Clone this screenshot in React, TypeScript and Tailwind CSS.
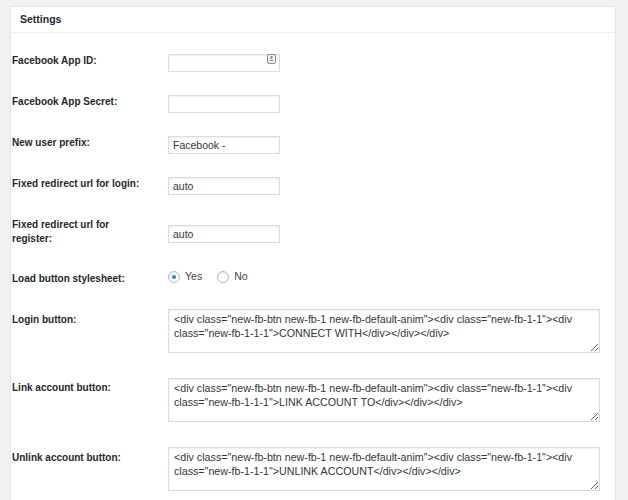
import React from "react";

const font = { fontFamily: '"Liberation Sans", Arial, sans-serif' };

const fbHtml = (text: string) =>
  `<div class="new-fb-btn new-fb-1 new-fb-default-anim"><div class="new-fb-1-1"><div class="new-fb-1-1-1">${text}</div></div></div>`;

const Label: React.FC<{ text: string }> = ({ text }) => (
  <div className="w-[157px] shrink-0 pl-[1px] pt-[21px] pr-[20px] text-[10px] font-bold leading-[14px] text-[#23282d]">
    {text}
  </div>
);

const TextInput: React.FC<{ value?: string; keyIcon?: boolean }> = ({ value = "", keyIcon }) => (
  <div className="relative w-[112px]">
    <input
      type="text"
      defaultValue={value}
      className="h-[18px] w-[112px] border border-[#dcdcdc] bg-white px-[4px] text-[10.5px] text-[#32373c] shadow-[inset_0_1px_2px_rgba(0,0,0,0.07)] outline-none"
      style={font}
    />
    {keyIcon && (
      <svg className="absolute right-[4px] top-[4px]" width="9" height="10" viewBox="0 0 9 10">
        <rect x="0.5" y="0.5" width="8" height="9" rx="1.5" fill="#f4f4f4" stroke="#8c8c8c" />
        <rect x="3.5" y="2" width="2" height="3" fill="#8c8c8c" />
        <rect x="2.5" y="6" width="4" height="1" fill="#8c8c8c" />
      </svg>
    )}
  </div>
);

const Area: React.FC<{ value: string }> = ({ value }) => (
  <textarea
    defaultValue={value}
    className="block h-[44px] w-[432px] resize-y border border-[#dcdcdc] bg-white px-[5px] pt-[2px] text-[10.7px] leading-[14px] text-[#32373c] shadow-[inset_0_1px_2px_rgba(0,0,0,0.07)] outline-none"
    style={font}
  />
);

const Radio: React.FC<{ checked?: boolean; label: string }> = ({ checked, label }) => (
  <label className="flex items-center gap-[5px]">
    <span className="flex h-[12px] w-[12px] items-center justify-center rounded-full border border-[#b4b9be] bg-white shadow-[inset_0_1px_2px_rgba(0,0,0,0.1)]">
      {checked && <span className="h-[4px] w-[4px] rounded-full bg-[#1e8cbe]" />}
    </span>
    <span className="text-[10.5px] text-[#444]">{label}</span>
  </label>
);

export default function App() {
  return (
    <div className="min-h-screen bg-[#f1f1f1] pl-[10px] pr-[12px] pt-[6px]" style={font}>
      <div className="h-[494px] overflow-hidden border border-b-0 border-[#e5e5e5] bg-white">
        <div className="flex h-[26px] items-center border-b border-[#eeeeee] px-[9px] text-[10.5px] font-bold text-[#23282d]">
          Settings
        </div>

        <div className="flex h-[41px]">
          <Label text="Facebook App ID:" />
          <div className="pt-[17px]">
            <TextInput keyIcon />
          </div>
        </div>

        <div className="flex h-[41px]">
          <Label text="Facebook App Secret:" />
          <div className="pt-[17px]">
            <TextInput />
          </div>
        </div>

        <div className="flex h-[41px]">
          <Label text="New user prefix:" />
          <div className="pt-[17px]">
            <TextInput value="Facebook -" />
          </div>
        </div>

        <div className="flex h-[41px]">
          <Label text="Fixed redirect url for login:" />
          <div className="pt-[17px]">
            <TextInput value="auto" />
          </div>
        </div>

        <div className="flex h-[54px]">
          <Label text="Fixed redirect url for register:" />
          <div className="pt-[24px]">
            <TextInput value="auto" />
          </div>
        </div>

        <div className="flex h-[41px]">
          <Label text="Load button stylesheet:" />
          <div className="mt-[19px] flex h-[14px] items-center gap-[15px]">
            <Radio checked label="Yes" />
            <Radio label="No" />
          </div>
        </div>

        <div className="flex h-[68px]">
          <Label text="Login button:" />
          <div className="pt-[17px]">
            <Area value={fbHtml("CONNECT WITH")} />
          </div>
        </div>

        <div className="flex h-[70px]">
          <Label text="Link account button:" />
          <div className="pt-[18px]">
            <Area value={fbHtml("LINK ACCOUNT TO")} />
          </div>
        </div>

        <div className="flex h-[70px]">
          <Label text="Unlink account button:" />
          <div className="pt-[17px]">
            <Area value={fbHtml("UNLINK ACCOUNT")} />
          </div>
        </div>
      </div>
    </div>
  );
}
